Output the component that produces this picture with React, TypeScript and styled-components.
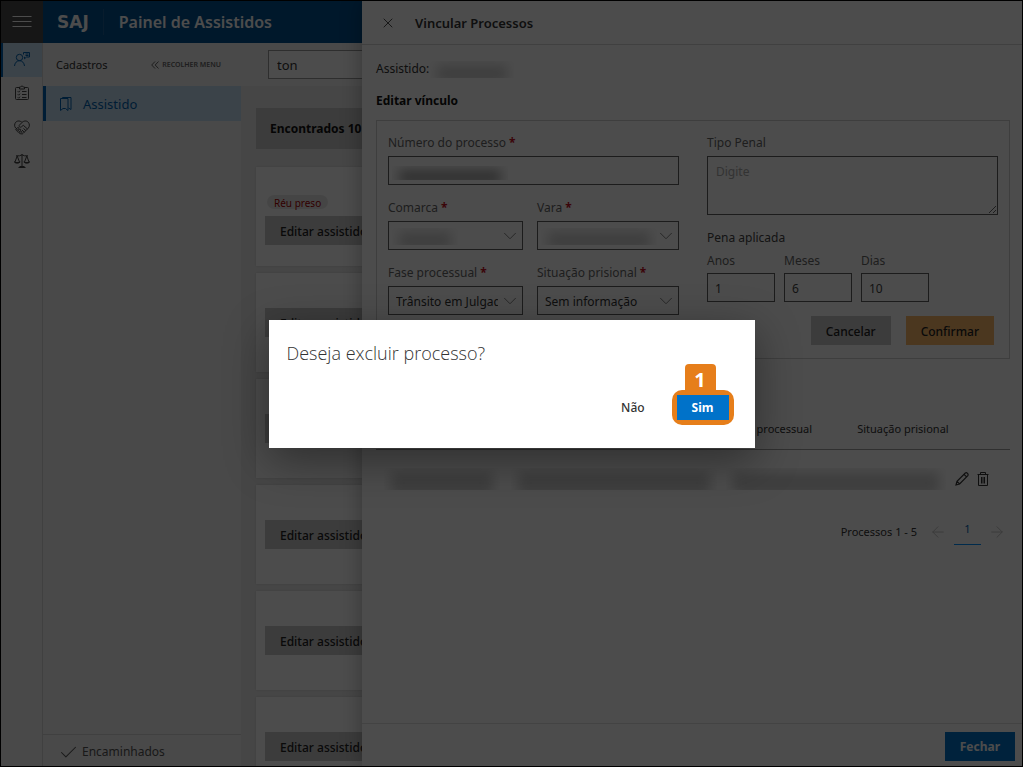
import React from "react";
import styled, { createGlobalStyle, css } from "styled-components";
import { ArrowLeft, ArrowRight, Check, ChevronDown, X } from "lucide-react";

const GlobalStyle = createGlobalStyle`
  *, *::before, *::after { box-sizing: border-box; }
  body {
    margin: 0;
    font-family: "Noto Sans", "Open Sans", sans-serif;
    font-size: 12px;
    line-height: 20px;
    color: #333;
  }
  button, input, select, textarea { font: inherit; color: inherit; border-radius: 0; }
`;

const Shell = styled.div`
  position: relative;
  display: flex;
  flex-direction: column;
  height: 100vh;
  overflow: hidden;
  border: 1px solid #000;
  background: #eaeaea;
`;

const TopBar = styled.header`
  display: flex;
  align-items: center;
  flex: none;
  height: 42px;
  background: #00508f;
  color: #fff;
`;

const MenuButton = styled.button`
  display: grid;
  place-items: center;
  width: 42px;
  height: 42px;
  padding: 0;
  border: 0;
  background: #4b4b4b;
  color: #fff;
`;

const Logo = styled.span`
  padding: 0 14px;
  font-family: "DejaVu Sans", sans-serif;
  font-size: 17px;
  font-weight: 700;
  line-height: 26px;
  border-right: 1px solid #1d5e97;
`;

const AppTitle = styled.h1`
  margin: 0;
  padding-left: 15px;
  font-size: 16px;
  font-weight: 600;
`;

const Body = styled.div`
  display: flex;
  flex: 1;
  min-height: 0;
`;

const Rail = styled.nav`
  display: flex;
  flex-direction: column;
  flex: none;
  width: 42px;
  border-right: 1px solid #d8d8d8;
  background: #f4f4f4;
`;

const RailLink = styled.a<{ $active?: boolean }>`
  display: grid;
  place-items: center;
  height: 34px;
  padding: 0 2px 2px 0;
  color: ${(p) => (p.$active ? "#0063b1" : "#444")};
  border-left: 2px solid ${(p) => (p.$active ? "#0063b1" : "transparent")};
  background: ${(p) => (p.$active ? "#c7e0f4" : "none")};
`;

const SidePanel = styled.aside`
  display: flex;
  flex-direction: column;
  flex: none;
  width: 198px;
  background: #f4f4f4;
`;

const SideHead = styled.div`
  display: flex;
  align-items: center;
  justify-content: space-between;
  height: 43px;
  padding: 0 20px 0 13px;
  font-size: 11px;
`;

const CollapseButton = styled.button`
  display: flex;
  align-items: center;
  gap: 3px;
  padding: 0;
  border: 0;
  background: none;
  color: #666;
  font-size: 7px;
  font-weight: 600;
`;

const SideLink = styled.a`
  display: flex;
  align-items: center;
  gap: 11px;
  height: 35px;
  padding-left: 13px;
  border-left: 3px solid #0063b1;
  background: #c7e0f4;
  color: #0063b1;
  font-size: 13px;
  text-decoration: none;
`;

const SideFoot = styled.a`
  display: flex;
  align-items: center;
  gap: 3px;
  height: 32px;
  margin-top: auto;
  padding: 3px 0 0 15px;
  border-top: 1px solid #d8d8d8;
  color: #555;
  text-decoration: none;
`;

const Content = styled.main`
  display: flex;
  flex-direction: column;
  flex: 1;
  min-width: 0;
`;

const SearchBar = styled.div`
  display: flex;
  align-items: center;
  flex: none;
  height: 43px;
  padding: 0 27px;
  background: #f4f4f4;
`;

const SearchInput = styled.input`
  flex: 1;
  height: 29px;
  padding: 0 8px;
  border: 1px solid #999;
  background: #fff;
  font-size: 13px;
`;

const Results = styled.div`
  display: flex;
  flex-direction: column;
  padding: 22px 15px 0;
`;

const ResultsTitle = styled.h2`
  margin: 0 0 18px;
  padding: 11px 14px 10px;
  background: #c8c8c8;
  color: #111;
  font-size: 12px;
  font-weight: 700;
`;

const Cards = styled.div`
  display: grid;
  gap: 7px;
`;

const Card = styled.article`
  display: flex;
  flex-direction: column;
  align-items: flex-start;
  justify-content: center;
  min-height: 99px;
  padding: 0 9px;
  background: #fff;
  box-shadow: 0 0 2px rgba(0, 0, 0, 0.12);
`;

const Badge = styled.span`
  margin: 7px 2px;
  padding: 1px 7px 0;
  border-radius: 7px;
  background: #e8e8e8;
  color: #a80000;
  font-size: 10px;
  line-height: 14px;
  height: 14px;
`;

const tones = {
  neutral: css`background: #c8c8c8; color: #222;`,
  accent: css`background: #fbb96a; color: #222;`,
  primary: css`background: #0072c9; color: #fff; font-weight: 700;`,
  plain: css`background: none; color: #333;`,
};

const Button = styled.button<{ $tone: keyof typeof tones }>`
  height: 29px;
  padding: 2px 15px 0;
  border: 0;
  font-weight: 500;
  white-space: nowrap;
  ${(p) => tones[p.$tone]}
`;

const Drawer = styled.section`
  position: absolute;
  top: 0;
  right: 0;
  bottom: 0;
  left: 361px;
  display: flex;
  flex-direction: column;
  background: #fff;
  box-shadow: 0 0 20px rgba(0, 0, 0, 0.3);
`;

const DrawerHead = styled.header`
  display: flex;
  align-items: center;
  gap: 19px;
  flex: none;
  height: 44px;
  padding: 0 18px;
  border-bottom: 1px solid #d8d8d8;
`;

const DrawerTitle = styled.h2`
  margin: 0;
  font-size: 13px;
  font-weight: 600;
`;

const IconButton = styled.button`
  display: grid;
  place-items: center;
  padding: 0;
  border: 0;
  background: none;
  color: #333;

  &:disabled { color: #c0c0c0; }
`;

const DrawerBody = styled.div`
  flex: 1;
  min-height: 0;
  padding: 14px 12px 0 14px;
`;

const Person = styled.p`
  display: flex;
  align-items: center;
  gap: 1px;
  margin: 0 0 12px;
`;

const Subtitle = styled.h3`
  margin: 0 0 9px;
  color: #111;
  font-size: 12px;
  font-weight: 700;
`;

const LinkForm = styled.form`
  display: grid;
  grid-template-columns: 1fr 1fr;
  column-gap: 28px;
  padding: 11px 11px 13px;
  border: 1px solid #d0d0d0;
`;

const FormColumn = styled.div`
  display: flex;
  flex-direction: column;
  gap: 12px;
`;

const SelectRow = styled.div`
  display: grid;
  grid-template-columns: 135fr 142fr;
  gap: 14px;
`;

const Field = styled.div`
  position: relative;
  display: flex;
  flex-direction: column;
  gap: 2px;
  min-width: 0;
`;

const Label = styled.label`
  color: #666;
  line-height: 22px;
`;

const Required = styled.span`
  margin-left: 3px;
  color: #c50f1f;
  font-weight: 700;
`;

const boxed = css`
  width: 100%;
  border: 1px solid #606060;
  background: #fff;
  padding: 2px 7px 0;
`;

const TextInput = styled.input`
  ${boxed}
  height: 29px;
`;

const Select = styled.select`
  ${boxed}
  height: 29px;
  padding-right: 24px;
  appearance: none;
`;

const TextArea = styled.textarea`
  ${boxed}
  display: block;
  height: 59px;
  padding: 5px 8px;
  resize: vertical;

  &::placeholder { color: #aaa; }
`;

const Control = styled.div`
  position: relative;

  > svg {
    position: absolute;
    top: 4px;
    right: 2px;
    pointer-events: none;
  }
`;

const Smudge = styled.span<{ $width: number; $height?: number; $dark?: boolean }>`
  display: block;
  width: ${(p) => p.$width}px;
  height: ${(p) => p.$height ?? 17}px;
  overflow: hidden;

  &::before {
    content: "";
    display: block;
    height: 100%;
    margin: 4px 7px 0;
    background: ${(p) => (p.$dark ? "#a0a0a0" : "#d0d0d0")};
    filter: blur(6px);
  }
`;

const CoveredValue = styled.div`
  position: absolute;
  left: 4px;
  bottom: 5px;
`;

const Sentence = styled.fieldset`
  margin: 0;
  padding: 0;
  border: 0;
  color: #444;

  legend { padding: 0; margin-bottom: 1px; line-height: 22px; }
`;

const SentenceRow = styled.div`
  display: grid;
  grid-template-columns: repeat(3, 68px);
  gap: 9px;

  > div { gap: 1px; }
`;

const FormActions = styled.div`
  display: flex;
  justify-content: flex-end;
  gap: 15px;
  padding: 2px 4px 0 0;
`;

const LinksTable = styled.table`
  width: 100%;
  margin-top: 50px;
  border-collapse: collapse;
  table-layout: fixed;

  th {
    height: 40px;
    padding: 0 0 0 12px;
    border-bottom: 1px solid #a0a0a0;
    font-size: 11px;
    font-weight: 400;
    text-align: left;
    white-space: nowrap;
  }

  td { height: 60px; padding: 0 0 0 8px; }
`;

const RowActions = styled.div`
  display: flex;
  gap: 8px;
`;

const Pager = styled.nav`
  display: flex;
  align-items: center;
  justify-content: flex-end;
  margin-top: 10px;
  padding-right: 4px;
  font-size: 11px;
`;

const PagerText = styled.span`
  margin-right: 12px;
`;

const PageLink = styled.a`
  width: 27px;
  margin: 0 7px;
  padding-bottom: 5px;
  border-bottom: 1px solid #0090ff;
  color: #0063b1;
  text-align: center;
  text-decoration: none;
`;

const DrawerFoot = styled.footer`
  display: flex;
  align-items: center;
  justify-content: flex-end;
  flex: none;
  height: 43px;
  padding: 2px 7px 0;
  border-top: 1px solid #e0e0e0;
`;

const Backdrop = styled.div`
  position: absolute;
  inset: 0;
  display: grid;
  place-items: center;
  background: rgba(0, 0, 0, 0.7);
`;

const Dialog = styled.div`
  display: flex;
  flex-direction: column;
  justify-content: space-between;
  width: 486px;
  max-width: 100%;
  min-height: 128px;
  padding: 21px 26px 26px 18px;
  background: #fff;
  box-shadow: 0 12px 44px rgba(0, 0, 0, 0.4);
`;

const DialogTitle = styled.h2`
  margin: 0;
  font-family: "Open Sans", "Noto Sans", sans-serif;
  font-size: 18px;
  font-weight: 300;
  line-height: 24px;
`;

const DialogActions = styled.div`
  display: flex;
  align-items: center;
  justify-content: flex-end;
  gap: 17px;
`;

const Highlight = styled.div`
  position: relative;
  border-radius: 5px;
  box-shadow: 0 0 0 5px #e67e1a;

  > button { display: block; height: 25px; }
`;

const StepTag = styled.span`
  position: absolute;
  bottom: 100%;
  left: 8px;
  width: 31px;
  height: 31px;
  border-radius: 4px;
  background: #e67e1a;
  color: #fff;
  font-size: 20px;
  font-weight: 700;
  line-height: 31px;
  text-align: center;
`;

const line = { fill: "none", stroke: "currentColor", strokeWidth: 1 } as const;

const MenuIcon = () => (
  <svg width="20" height="14" viewBox="0 0 20 14" {...line}>
    <path d="M0.5 1.5h19M0.5 6.5h19M0.5 11.5h19" />
  </svg>
);

const PersonIcon = () => (
  <svg width="16" height="16" viewBox="0 0 16 16" {...line}>
    <circle cx="5.5" cy="6.500" r="3.200" />
    <path d="M0.500 15c.3-3.200 2.300-5.300 5-5.300s4.700 2.100 5 5.300M9.500 3.500v-2h6v4.500h-3l-2 1.800v-2" />
    <path d="M11.500 3h3M11.500 4.500h3" />
  </svg>
);

const ClipboardIcon = () => (
  <svg width="14" height="16" viewBox="0 0 14 16" {...line}>
    <path d="M4.500 2.500H1.500a1 1 0 0 0-1 1v10a1 1 0 0 0 1 1h11a1 1 0 0 0 1-1v-10a1 1 0 0 0-1-1h-3M4.500 4V2h1.200c.3-1.300 2.300-1.300 2.600 0h1.200v2zM2.800 6.300l.9.9 1.300-1.500M2.800 9.300l.9.9L5 8.700M2.800 12.300l.9.9L5 11.700M7 6.500h4.500M7 9.500h4.500M7 12.500h4.500" />
  </svg>
);

const HandshakeIcon = () => (
  <svg width="16" height="15" viewBox="0 0 16 15" {...line}>
    <path d="M8 2.500C6.500.8 3.500.3 1.800 2.200.2 4 .3 6.300 1.600 8L3 9.300M8 2.500c1.500-1.700 4.500-2.200 6.200-.3 1.600 1.800 1.500 4.100.2 5.800L9 13.500c-.6.6-1.500.6-2 0" />
    <path d="M8 2.500L5.500 5c-.7.700-.5 1.700.2 2 .8.400 1.500.1 2.100-.5L9.300 5.300l4.200 3.700M9.500 8.500l2.500 2.200M8 10l2.300 2.200" />
    <path d="M1.800 9.300l1.500-1.500c1-.8 2 .2 1.300 1.100l-1 1.100c-1 .9-2.300.2-1.800-.7zM3.600 11.200l1.700-1.800c1-.7 1.900.2 1.200 1.100l-1.200 1.300c-1 .9-2.200.2-1.700-.6zM5.600 12.700l1-1c1-.7 1.800.2 1.100 1l-.8.900c-.8.500-1.700 0-1.300-.9z" />
  </svg>
);

const ScaleIcon = () => (
  <svg width="16" height="16" viewBox="0 0 16 16" {...line}>
    <path d="M8 1v13.500M4.500 14.500h7M5.500 13.500h5M2 2.800h3.500L8 1.800l2.500 1H14" />
    <path d="M3.200 3L0.800 9.500h4.900zM12.800 3l-2.500 6.500h4.900zM0.500 8.500c.2 2.300 5.200 2.300 5.400 0M10.100 8.500c.2 2.300 5.200 2.300 5.400 0" />
  </svg>
);

const CollapseIcon = () => (
  <svg width="8" height="8" viewBox="0 0 8 8" {...line}>
    <path d="M4 0.500L0.700 4 4 7.500M7.500 0.500L4.200 4l3.300 3.500" />
  </svg>
);

const BookmarksIcon = () => (
  <svg width="13" height="16" viewBox="0 0 13 16" {...line}>
    <path d="M1.500 2.500h7.500v12l-2.500-2h-2.500l-2.500 2zM3.500 2.500v-1h8.500v12l-2.500-1.500" />
  </svg>
);

const PencilIcon = () => (
  <svg width="14" height="14" viewBox="0 0 14 14" {...line} strokeWidth={1.2}>
    <path d="M1 13l1-3.700L10.300 1c1.500-1 3.500 1 2.500 2.600L4.600 12zM2 9.300L4.600 12M9 2.300l2.600 2.600" />
  </svg>
);

const TrashIcon = () => (
  <svg width="12" height="14" viewBox="0 0 12 14" {...line}>
    <path d="M0.500 2.500h11M3.500 2.500v-2h5v2M1.500 2.500v11h9v-11M4.500 5v6.500M6 5v6.500M7.500 5v6.500" />
  </svg>
);

const CardItem = ({ tag }: { tag?: string }) => (
  <Card>
    {tag && <Badge>{tag}</Badge>}
    <Button type="button" $tone="neutral">Editar assistido</Button>
  </Card>
);

const Mark = () => <Required>*</Required>;

type PickProps = { id: string; label: string; value?: string; covered?: number };

const Pick = ({ id, label, value = "", covered }: PickProps) => (
  <Field>
    <Label htmlFor={id}>{label}<Mark /></Label>
    <Control>
      <Select id={id} defaultValue={value}>
        <option value={value}>{value}</option>
      </Select>
      <ChevronDown size={22} strokeWidth={1} color="#777" />
      {covered && <CoveredValue><Smudge $width={covered} /></CoveredValue>}
    </Control>
  </Field>
);

const Amount = ({ id, label, value }: { id: string; label: string; value: string }) => (
  <Field>
    <Label htmlFor={id}>{label}</Label>
    <TextInput id={id} defaultValue={value} />
  </Field>
);

export default function App() {
  return (
    <>
      <GlobalStyle />
      <Shell>
        <TopBar>
          <MenuButton type="button" aria-label="Menu"><MenuIcon /></MenuButton>
          <Logo>SAJ</Logo>
          <AppTitle>Painel de Assistidos</AppTitle>
        </TopBar>
        <Body>
          <Rail>
            <RailLink href="#assistidos" aria-label="Assistidos" $active><PersonIcon /></RailLink>
            <RailLink href="#tarefas" aria-label="Tarefas"><ClipboardIcon /></RailLink>
            <RailLink href="#acordos" aria-label="Acordos"><HandshakeIcon /></RailLink>
            <RailLink href="#justica" aria-label="Justiça"><ScaleIcon /></RailLink>
          </Rail>
          <SidePanel>
            <SideHead>
              <span>Cadastros</span>
              <CollapseButton type="button"><CollapseIcon />RECOLHER MENU</CollapseButton>
            </SideHead>
            <SideLink href="#assistido"><BookmarksIcon />Assistido</SideLink>
            <SideFoot href="#encaminhados"><Check size={21} strokeWidth={1.2} />Encaminhados</SideFoot>
          </SidePanel>
          <Content>
            <SearchBar><SearchInput aria-label="Pesquisar" defaultValue="ton" /></SearchBar>
            <Results>
              <ResultsTitle>Encontrados 10</ResultsTitle>
              <Cards>
                <CardItem tag="Réu preso" />
                <CardItem />
                <CardItem />
                <CardItem />
                <CardItem />
                <CardItem />
              </Cards>
            </Results>
          </Content>
        </Body>

        <Drawer>
          <DrawerHead>
            <IconButton type="button" aria-label="Fechar painel"><X size={16} strokeWidth={1.3} /></IconButton>
            <DrawerTitle>Vincular Processos</DrawerTitle>
          </DrawerHead>
          <DrawerBody>
            <Person>Assistido: <Smudge $width={84} /></Person>
            <Subtitle>Editar vínculo</Subtitle>
            <LinkForm>
              <FormColumn>
                <Field>
                  <Label htmlFor="numero">Número do processo<Mark /></Label>
                  <Control>
                    <TextInput id="numero" />
                    <CoveredValue><Smudge $width={116} $height={14} $dark /></CoveredValue>
                  </Control>
                </Field>
                <SelectRow>
                  <Pick id="comarca" label="Comarca" covered={66} />
                  <Pick id="vara" label="Vara" covered={116} />
                </SelectRow>
                <SelectRow>
                  <Pick id="fase" label="Fase processual" value="Trânsito em Julgado" />
                  <Pick id="situacao" label="Situação prisional" value="Sem informação" />
                </SelectRow>
              </FormColumn>
              <FormColumn>
                <Field>
                  <Label htmlFor="tipo">Tipo Penal</Label>
                  <TextArea id="tipo" placeholder="Digite" />
                </Field>
                <Sentence>
                  <legend>Pena aplicada</legend>
                  <SentenceRow>
                    <Amount id="anos" label="Anos" value="1" />
                    <Amount id="meses" label="Meses" value="6" />
                    <Amount id="dias" label="Dias" value="10" />
                  </SentenceRow>
                </Sentence>
                <FormActions>
                  <Button type="button" $tone="neutral">Cancelar</Button>
                  <Button type="button" $tone="accent">Confirmar</Button>
                </FormActions>
              </FormColumn>
            </LinkForm>

            <LinksTable>
              <colgroup>
                <col style={{ width: "20%" }} />
                <col style={{ width: "34%" }} />
                <col style={{ width: "20%" }} />
                <col style={{ width: "16%" }} />
                <col />
              </colgroup>
              <thead>
                <tr>
                  <th>Processo</th>
                  <th>Vara</th>
                  <th>Fase processual</th>
                  <th>Situação prisional</th>
                  <th aria-label="Ações" />
                </tr>
              </thead>
              <tbody>
                <tr>
                  <td><Smudge $width={116} $height={22} /></td>
                  <td><Smudge $width={206} $height={22} /></td>
                  <td colSpan={2}><Smudge $width={220} $height={22} /></td>
                  <td>
                    <RowActions>
                      <IconButton type="button" aria-label="Editar"><PencilIcon /></IconButton>
                      <IconButton type="button" aria-label="Excluir"><TrashIcon /></IconButton>
                    </RowActions>
                  </td>
                </tr>
              </tbody>
            </LinksTable>
            <Pager>
              <PagerText>Processos 1 - 5</PagerText>
              <IconButton type="button" aria-label="Anterior" disabled><ArrowLeft size={18} strokeWidth={1.2} /></IconButton>
              <PageLink href="#pagina-1">1</PageLink>
              <IconButton type="button" aria-label="Próxima" disabled><ArrowRight size={18} strokeWidth={1.2} /></IconButton>
            </Pager>
          </DrawerBody>
          <DrawerFoot><Button type="button" $tone="primary">Fechar</Button></DrawerFoot>
        </Drawer>

        <Backdrop>
          <Dialog role="dialog" aria-modal="true" aria-labelledby="pergunta">
            <DialogTitle id="pergunta">Deseja excluir processo?</DialogTitle>
            <DialogActions>
              <Button type="button" $tone="plain">Não</Button>
              <Highlight>
                <StepTag>1</StepTag>
                <Button type="button" $tone="primary">Sim</Button>
              </Highlight>
            </DialogActions>
          </Dialog>
        </Backdrop>
      </Shell>
    </>
  );
}
